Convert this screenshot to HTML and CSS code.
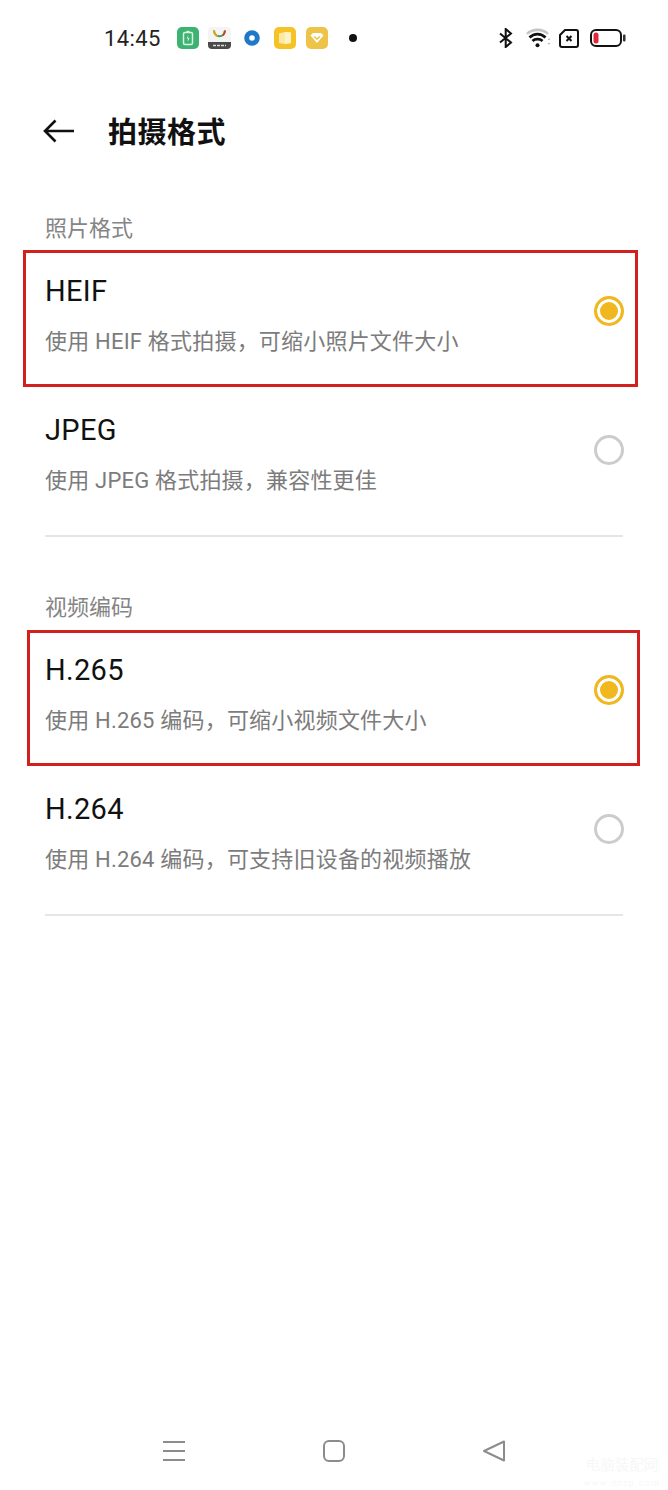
FILE: index.html
```html
<!DOCTYPE html>
<html lang="zh-CN">
<head>
  <meta charset="UTF-8">
  <meta name="viewport" content="width=device-width, initial-scale=1.0">
  <title>拍摄格式</title>
  <link rel="stylesheet" href="styles.css">
</head>
<body>

  <div class="screen">
    <!-- Status bar -->
    <div class="status-bar">
      <div class="status-left">
        <span class="time">14:45</span>
        <svg class="app-icon" width="22" height="22" viewBox="0 0 22 22">
          <rect width="22" height="22" rx="5" fill="#3cb371"/>
          <rect x="6.5" y="5.5" width="9" height="12" rx="1.5" fill="none" stroke="#dff3e6" stroke-width="1.5"/>
          <rect x="9.5" y="3.8" width="3" height="1.6" fill="#dff3e6"/>
          <path d="M11.5 8 9.500 11.500H11L10.500 15 12.600 11H11Z" fill="#dff3e6"/>
        </svg>
        <svg class="app-icon" width="23" height="22" viewBox="0 0 23 22">
          <rect width="23" height="22" rx="4" fill="#f4f4f4"/>
          <path d="M0 15H23V18A4 4 0 0 1 19 22H4A4 4 0 0 1 0 18Z" fill="#4a4a4a"/>
          <path d="M6 3.500C6.500 11 16.500 11 17 3.500" fill="none" stroke="#3fa34d" stroke-width="2"/>
          <path d="M6 3.500C6.200 6.500 7.500 8.400 9.500 9.200" fill="none" stroke="#e2a320" stroke-width="2"/>
          <path d="M17 3.500C16.800 5.800 16 7.300 14.800 8.200" fill="none" stroke="#d63a2f" stroke-width="2"/>
          <path d="M5 18.500H18" stroke="#ddd" stroke-width="1.400" stroke-dasharray="3 1"/>
        </svg>
        <svg class="app-icon icon-dot-ring" width="16" height="16" viewBox="0 0 16 16">
          <circle cx="8" cy="8" r="5.300" fill="none" stroke="#1f78c8" stroke-width="5"/>
        </svg>
        <svg class="app-icon icon-book" width="22" height="22" viewBox="0 0 22 22">
          <rect width="22" height="22" rx="5" fill="#f6c225"/>
          <path d="M5 6.500 11 5 17 5.500V16L11 17 5 16Z" fill="#fbeaa6"/>
          <path d="M11 5V17L17 16V5.500Z" fill="#fdf3c6"/>
        </svg>
        <svg class="app-icon" width="22" height="22" viewBox="0 0 22 22">
          <rect width="22" height="22" rx="5" fill="#edc447"/>
          <path d="M4.500 8.500 7 6H15L17.500 8.500 11 16Z" fill="#fff"/>
          <path d="M8 9.500 11 12 14 9.500" fill="none" stroke="#edc447" stroke-width="1.600"/>
        </svg>
        <span class="notify-dot"></span>
      </div>
      <div class="status-right">
        <svg width="14" height="20" viewBox="0 0 14 20">
          <path d="M1 5.500 12 14.500 6.700 19V1L12 5.500 1 14.500" fill="none" stroke="#111" stroke-width="2"/>
        </svg>
        <svg class="icon-wifi" width="25" height="20" viewBox="0 0 25 20">
          <path d="M1 6C6 0.500 17 0.500 22 6" fill="none" stroke="#c4c4c4" stroke-width="2.600"/>
          <path d="M3.500 9.500C8 5 15 5 19.500 9.500" fill="none" stroke="#111" stroke-width="2.800"/>
          <path d="M6.500 13C9 10.500 14 10.500 16.500 13" fill="none" stroke="#111" stroke-width="2.800"/>
          <circle cx="11.500" cy="17.200" r="2" fill="#111"/>
          <path d="M21.500 12 23 10 24.500 12ZM21.500 15 23 17 24.500 15Z" fill="#bdbdbd"/>
        </svg>
        <svg class="icon-sim" width="20" height="19" viewBox="0 0 20 19">
          <path d="M6 1H17A2 2 0 0 1 19 3V16A2 2 0 0 1 17 18H3A2 2 0 0 1 1 16V6Z" fill="none" stroke="#111" stroke-width="2" stroke-linejoin="round"/>
          <path d="M7.500 7 12.500 12M12.500 7 7.500 12" stroke="#111" stroke-width="2"/>
        </svg>
        <svg class="icon-battery" width="36" height="20" viewBox="0 0 36 20">
          <rect x="1" y="2" width="30" height="16" rx="5" fill="none" stroke="#111" stroke-width="2"/>
          <rect x="3.500" y="4.500" width="5" height="11" rx="2.500" fill="#e0283c"/>
          <rect x="33" y="6.500" width="2.500" height="7" rx="1" fill="#333"/>
        </svg>
      </div>
    </div>

    <!-- Title row -->
    <div class="header">
      <svg class="back" width="32" height="24" viewBox="0 0 32 24">
        <path d="M31 12H2M12.500 1.500 2 12 12.500 22.500" fill="none" stroke="#111" stroke-width="2.600"/>
      </svg>
      <div class="page-title">拍摄格式</div>
    </div>

    <div class="content">
      <div class="section">
        <div class="section-label">照片格式</div>
        <div class="row">
          <div class="row-text">
            <div class="row-title">HEIF</div>
            <div class="row-sub">使用 HEIF 格式拍摄，可缩小照片文件大小</div>
          </div>
          <span class="radio checked"></span>
          <div class="mark mark-first"></div>
        </div>
        <div class="row">
          <div class="row-text">
            <div class="row-title">JPEG</div>
            <div class="row-sub">使用 JPEG 格式拍摄，兼容性更佳</div>
          </div>
          <span class="radio"></span>
        </div>
        <div class="divider"></div>
      </div>

      <div class="section">
        <div class="section-label">视频编码</div>
        <div class="row">
          <div class="row-text">
            <div class="row-title">H.265</div>
            <div class="row-sub">使用 H.265 编码，可缩小视频文件大小</div>
          </div>
          <span class="radio checked"></span>
          <div class="mark mark-second"></div>
        </div>
        <div class="row">
          <div class="row-text">
            <div class="row-title">H.264</div>
            <div class="row-sub">使用 H.264 编码，可支持旧设备的视频播放</div>
          </div>
          <span class="radio"></span>
        </div>
        <div class="divider"></div>
      </div>
    </div>

    <!-- Navigation bar -->
    <div class="nav-bar">
      <svg width="24" height="22" viewBox="0 0 24 22">
        <path d="M1 2H23M1 11H23M1 20H23" stroke="#8c8c8c" stroke-width="2"/>
      </svg>
      <svg width="24" height="24" viewBox="0 0 24 24">
        <rect x="2" y="2" width="20" height="20" rx="5" fill="none" stroke="#8c8c8c" stroke-width="2"/>
      </svg>
      <svg width="24" height="24" viewBox="0 0 24 24">
        <path d="M22 2.500V21.500L2 12Z" fill="none" stroke="#8c8c8c" stroke-width="2" stroke-linejoin="round"/>
      </svg>
    </div>

    <div class="watermark">
      <div class="watermark-name">电脑装配网</div>
      <div class="watermark-url">www.dnzp.com</div>
    </div>
  </div>

</body>
</html>
```

FILE: styles.css
```css
body, html {
  margin: 0;
  padding: 0;
  background: #fff;
  font-family: Roboto, "Noto Sans CJK SC", sans-serif;
}

.screen {
  width: 668px;
  height: 1490px;
  display: flex;
  flex-direction: column;
  position: relative;
  overflow: hidden;
}

/* Status bar */
.status-bar {
  height: 76px;
  display: flex;
  align-items: center;
  justify-content: space-between;
  padding: 0 42px 0 104px;
  box-sizing: border-box;
}

.status-left,
.status-right {
  display: flex;
  align-items: center;
}

.time {
  width: 73px;
  font-size: 22px;
  letter-spacing: 0.4px;
  color: #222;
}

.app-icon {
  margin-right: 9px;
}

.icon-dot-ring {
  margin: 0 14px 0 4px;
}

.icon-book {
  margin-right: 10px;
}

.notify-dot {
  width: 8px;
  height: 8px;
  margin-left: 12px;
  border-radius: 50%;
  background: #111;
}

.icon-wifi {
  margin-left: 13px;
}

.icon-sim {
  margin-left: 8px;
}

.icon-battery {
  margin-left: 11px;
}

/* Title row */
.header {
  height: 112px;
  display: flex;
  align-items: center;
  padding-left: 43px;
}

.back {
  margin-right: 33px;
  margin-bottom: 2px;
}

.page-title {
  margin-bottom: 4px;
  font-size: 29px;
  font-weight: 700;
  letter-spacing: 0.5px;
  color: #111;
}

/* Settings list */
.content {
  flex-grow: 1;
  padding-top: 28px;
}

.section {
  margin-bottom: 58px;
}

.section-label {
  height: 26px;
  line-height: 26px;
  padding-left: 45px;
  font-size: 22px;
  color: #858585;
}

.row {
  height: 139px;
  display: flex;
  align-items: center;
  justify-content: space-between;
  padding: 0 44px 0 45px;
  position: relative;
}

.row-text {
  padding-top: 7px;
}

.row-title {
  height: 36px;
  line-height: 34px;
  font-size: 29px;
  letter-spacing: 0.3px;
  color: #111;
}

.row-sub {
  height: 30px;
  line-height: 30px;
  margin-top: 17px;
  font-size: 22px;
  letter-spacing: 0.2px;
  color: #7c7c7c;
}

.radio {
  width: 30px;
  height: 30px;
  margin-bottom: 1px;
  box-sizing: border-box;
  border: 3px solid #cccccc;
  border-radius: 50%;
}

.radio.checked {
  border-color: #f0b71e;
  background: #f0b71e;
  box-shadow: inset 0 0 0 3px #fff;
}

.divider {
  height: 2px;
  margin: 15px 45px 0;
  background: #e6e6e6;
}

/* Red annotation boxes drawn over the rows */
.mark {
  position: absolute;
  box-sizing: border-box;
  border: 3px solid #d2201f;
}

.mark-first {
  left: 23px;
  top: 8px;
  width: 615px;
  height: 137px;
}

.mark-second {
  left: 27px;
  top: 9px;
  width: 613px;
  height: 136px;
}

/* Navigation bar */
.nav-bar {
  height: 78px;
  display: flex;
  align-items: center;
  justify-content: center;
  gap: 136px;
}

/* Faint site mark in the corner */
.watermark {
  position: absolute;
  right: 8px;
  bottom: 0;
  color: #f7f7f7;
  text-align: center;
}

.watermark-name {
  font-size: 14.5px;
  line-height: 20px;
}

.watermark-url {
  font-size: 9px;
  line-height: 14px;
  letter-spacing: 1.2px;
}
```
